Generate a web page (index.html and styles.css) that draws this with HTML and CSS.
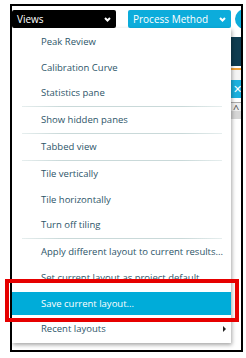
FILE: index.html
```html
<!DOCTYPE html>
<html lang="en">
<head>
  <meta charset="UTF-8" />
  <title>Views menu</title>
  <link rel="stylesheet" href="styles.css">
</head>
<body>

<div class="frame">
  <div class="toolbar">
    <div class="drop views">
      <span>Views</span>
      <svg class="chev" width="7" height="5" viewBox="0 0 7 5"><polyline points="1,1 3.5,3.5 6,1" /></svg>
    </div>
    <div class="drop method">
      <span>Process Method</span>
      <svg class="chev" width="7" height="5" viewBox="0 0 7 5"><polyline points="1,1 3.5,3.5 6,1" /></svg>
    </div>
    <div class="round"></div>
  </div>

  <div class="main">
    <ul class="menu">
      <li class="item">Peak Review</li>
      <li class="item">Calibration Curve</li>
      <li class="item">Statistics pane</li>
      <li class="sep"></li>
      <li class="item">Show hidden panes</li>
      <li class="sep"></li>
      <li class="item">Tabbed view</li>
      <li class="sep"></li>
      <li class="item">Tile vertically</li>
      <li class="item">Tile horizontally</li>
      <li class="item">Turn off tiling</li>
      <li class="sep"></li>
      <li class="item">Apply different layout to current results...</li>
      <li class="item">Set current layout as project default</li>
      <li class="item active">Save current layout...</li>
      <li class="item sub">Recent layouts <span class="arrow"></span></li>
    </ul>

    <div class="side">
      <div class="s-white"></div>
      <div class="s-dark"></div>
      <div class="s-gap"></div>
      <div class="s-orange"></div>
      <div class="s-light"></div>
      <div class="s-cyan">✕</div>
      <div class="s-gap2"></div>
      <div class="s-gray">^</div>
      <div class="s-lgray"></div>
    </div>
  </div>
</div>

<!-- annotation box drawn over the screenshot -->
<div class="callout"></div>

</body>
</html>
```

FILE: styles.css
```css
body {
  margin: 0;
  background: #fff;
  font-family: "Open Sans", "Noto Sans", sans-serif;
}
.frame {
  margin: 4px 0 0 10px;
  width: 233px;
  height: 348px;
  border: 2px solid #000;
  box-sizing: border-box;
  overflow: hidden;
  position: relative;
}
.toolbar {
  display: flex;
  align-items: center;
  padding-top: 4px;
  height: 18px;
}
.drop {
  flex: none;
  height: 18px;
  display: flex;
  align-items: center;
  justify-content: space-between;
  box-sizing: border-box;
  padding: 0 5px;
  border-radius: 2px;
  color: #fff;
  font-size: 10px;
}
.views {
  width: 104px;
  background: #000;
}
.method {
  width: 103px;
  margin-left: 12px;
  background: #0cacdb;
}
.chev polyline {
  fill: none;
  stroke: #fff;
  stroke-width: 2;
}
.round {
  width: 20px;
  height: 20px;
  flex: none;
  margin-left: 4px;
  border-radius: 50%;
  background: #0cacdb;
}
.main {
  display: flex;
}
.menu {
  list-style: none;
  margin: 0;
  padding: 1.25px 0 2px;
  width: 219px;
  flex: none;
  background: #fff;
  box-shadow: 1px 2px 4px rgba(0, 0, 0, 0.35);
  position: relative;
  z-index: 1;
}
.item {
  height: 25.5px;
  line-height: 25.5px;
  padding-left: 29px;
  font-size: 9.5px;
  color: #2d5569;
  white-space: nowrap;
}
.item.active {
  height: 23px;
  line-height: 23px;
  margin: 1.25px 0;
  background: #00acd9;
  color: #fff;
}
.sub {
  display: flex;
  justify-content: space-between;
  align-items: center;
  padding-right: 5px;
}
.arrow {
  width: 0;
  height: 0;
  border-top: 3px solid transparent;
  border-bottom: 3px solid transparent;
  border-left: 3px solid #222;
}
.sep {
  height: 1px;
  margin: 0 9px 0.5px 10px;
  background: linear-gradient(90deg, #e6eeee, #c9d9d9 20%, #c9d9d9 80%, #e6eeee);
}
.side {
  flex: 1;
  font-size: 11px;
  overflow: hidden;
}
.s-white {
  height: 9px;
}
.s-dark {
  height: 29px;
  background: #0f3c50;
}
.s-gap {
  height: 2px;
}
.s-orange {
  height: 2px;
  background: #f2a33a;
}
.s-light {
  height: 10px;
  background: #f4f4f4;
}
.s-cyan {
  height: 18px;
  line-height: 18px;
  background: #1cb0de;
  color: #fff;
  padding-left: 2px;
}
.s-gap2 {
  height: 4px;
  border-bottom: 1px solid #aaa;
}
.s-gray {
  height: 8px;
  line-height: 12px;
  color: #444;
  background: #eee;
  padding-left: 2px;
}
.s-lgray {
  height: 8px;
  background: #d6d6d6;
}
.callout {
  position: absolute;
  z-index: 2;
  left: 5px;
  top: 279px;
  width: 234px;
  height: 43px;
  border: 4px solid #e60000;
  box-sizing: border-box;
}
```
